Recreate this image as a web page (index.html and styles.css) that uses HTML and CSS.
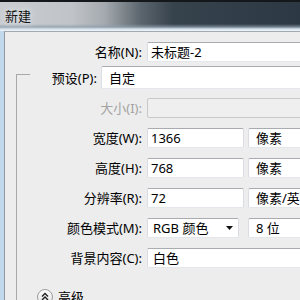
FILE: index.html
```html
<!DOCTYPE html>
<html lang="zh-CN">
<head>
<meta charset="utf-8">
<title>新建</title>
<link rel="stylesheet" href="styles.css">
</head>
<body>
<div class="window">
  <div class="titlebar"><span class="title">新建</span></div>
  <div class="frame">
    <div class="frame-edge"></div>
    <div class="content">
      <div class="row name-row">
        <span class="label name-label">名称(N):</span>
        <div class="field text name-field">未标题-2</div>
      </div>
      <div class="group">
        <div class="legend">
          <span class="label preset-label">预设(P):</span>
          <div class="field combo preset-field">自定</div>
        </div>
        <div class="row grp-row r-size">
          <span class="label disabled-label">大小(I):</span>
          <div class="field disabled size-field"></div>
        </div>
        <div class="row grp-row r-gap">
          <span class="label">宽度(W):</span>
          <div class="field text num-field">1366</div>
          <div class="field combo unit-field">像素</div>
        </div>
        <div class="row grp-row r-gap">
          <span class="label">高度(H):</span>
          <div class="field text num-field">768</div>
          <div class="field combo unit-field">像素</div>
        </div>
        <div class="row grp-row r-gap">
          <span class="label">分辨率(R):</span>
          <div class="field text num-field">72</div>
          <div class="field combo unit-field">像素/英寸</div>
        </div>
        <div class="row grp-row r-gap">
          <span class="label">颜色模式(M):</span>
          <div class="field combo mode-field">
            <span class="combo-text">RGB 颜色</span>
            <svg class="arrow" width="7" height="4" viewBox="0 0 7 4"><path d="M0 0H7L3.5 4Z" fill="#111"/></svg>
          </div>
          <div class="field combo unit-field">8 位</div>
        </div>
        <div class="row grp-row r-gap">
          <span class="label">背景内容(C):</span>
          <div class="field combo bg-field">白色</div>
        </div>
        <div class="advanced">
          <span class="adv-btn">
            <svg width="16" height="16" viewBox="0 0 16 16">
              <path d="M5 7.5L8 4.5L11 7.5M5 11L8 8L11 11" fill="none" stroke="#222" stroke-width="1.4"/>
            </svg>
          </span>
          <span class="adv-label">高级</span>
          <span class="adv-line"></span>
        </div>
      </div>
    </div>
  </div>
</div>
</body>
</html>
```
FILE: styles.css
```css
* { box-sizing: border-box; margin: 0; padding: 0; }
html, body { width: 300px; height: 300px; overflow: hidden; }
body {
  margin: 0;
  font-family: "Noto Sans", "Noto Sans CJK SC", sans-serif;
  font-size: 13px;
  color: #000;
  background: #ededed;
}
.window { width: 300px; height: 300px; display: flex; flex-direction: column; }
.titlebar {
  height: 31px;
  flex-shrink: 0;
  display: flex;
  align-items: center;
  padding-left: 5px;
  background:
    linear-gradient(to bottom, #15181b 0, #15181b 2px, rgba(0,0,0,0) 2px, rgba(0,0,0,0) 24px, rgba(140,156,170,.75) 27px, #d6e2ec 29px, #eef4f9 31px),
    linear-gradient(to right, #c9cdd1 0, #c0c4c8 24%, #a3a9ae 35%, #5b656d 47%, #36424c 58%, #2c3843 100%);
}
.title {
  font-family: "Noto Sans CJK SC", sans-serif;
  font-size: 13px;
  line-height: 16px;
  color: #141414;
  text-shadow: 0 0 5px #dfe3e6, 0 0 9px #dfe3e6;
  padding-top: 1px;
}
.frame { flex: 1; display: flex; min-height: 0; }
.frame-edge { width: 4px; flex-shrink: 0; background: #c2d8ed; }
.content {
  flex: 1;
  min-width: 0;
  overflow: hidden;
  background: #ededed;
  border-left: 1px solid #8e979f;
  border-top: 1px solid #a3abb2;
}
.row { display: flex; align-items: center; height: 20px; }
.label { flex-shrink: 0; text-align: right; white-space: nowrap; line-height: 20px; }
.name-row { margin-top: 10px; }
.name-label { width: 137px; margin-right: 5px; }
.field {
  flex-shrink: 0;
  height: 100%;
  background: #fff;
  border: 1px solid;
  border-color: #a9abb0 #dadde2 #e3e7ec #dadde2;
  border-radius: 2px;
  display: flex;
  align-items: center;
  white-space: nowrap;
  overflow: hidden;
  line-height: 18px;
}
.text { padding-left: 3px; }
.combo { padding-left: 7px; }
.name-field { width: 170px; }
.group {
  margin-top: 12px;
  margin-left: 11px;
  border-left: 1px solid #a9a9a9;
  border-top: 1px solid #a9a9a9;
  height: 260px;
}
.legend {
  margin-top: -9px;
  margin-left: 13px;
  height: 23px;
  display: flex;
  align-items: center;
  background: #ededed;
}
.preset-label { width: 67px; margin-right: 4px; }
.preset-field { width: 220px; }
.grp-row .label { width: 125px; margin-right: 5px; }
.r-size { margin-top: 9px; }
.r-gap { margin-top: 10px; }
.disabled-label { color: #a3a3a3; }
.disabled { background: #efefef; border-color: #c9c9c9; }
.size-field { width: 170px; }
.num-field { width: 97px; margin-right: 4px; }
.unit-field { width: 80px; }
.mode-field { width: 92px; margin-right: 9px; padding-left: 5px; padding-right: 5px; justify-content: space-between; }
.bg-field { width: 170px; padding-left: 5px; }
.advanced {
  margin-top: 21px;
  margin-left: 20px;
  height: 16px;
  display: flex;
  align-items: center;
}
.adv-btn {
  width: 16px;
  height: 16px;
  flex-shrink: 0;
  border-radius: 50%;
  border: 1px solid #9c9c9c;
  background: linear-gradient(#ffffff, #e2e2e2);
  display: flex;
  align-items: center;
  justify-content: center;
}
.adv-btn svg { display: block; margin: -1px; }
.adv-label { margin-left: 5px; line-height: 16px; }
.adv-line { flex: 1; height: 1px; background: #a9a9a9; margin-left: 3px; margin-top: 8px; }
```
